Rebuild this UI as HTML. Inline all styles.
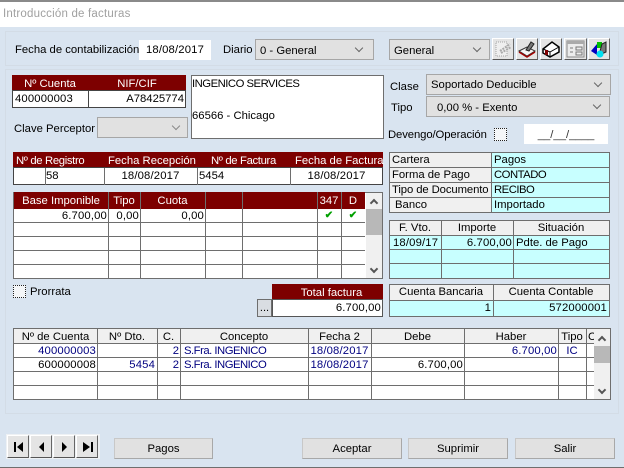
<!DOCTYPE html>
<html><head><meta charset="utf-8">
<style>
html,body{margin:0;padding:0;width:624px;height:468px;overflow:hidden;background:#d9e4f0}
body{position:relative;font-family:"Liberation Sans",sans-serif;font-size:11.3px;color:#000}
div{position:absolute;box-sizing:border-box}
.t{white-space:nowrap;line-height:14px;height:14px}
.r{text-align:right}.m{text-align:center}
.w{color:#fff}.b{color:#000080}
.n{letter-spacing:.15px}
.c{letter-spacing:-.5px}
.h{background:#6e6e6e;height:1px}
.v{background:#6e6e6e;width:1px}
.mar{background:#7d0000}
.box{background:#fff;border:1px solid #6e6e6e}
.sel{background:#e1e1e1;border:1px solid #a6a6a6;padding:3px 0 0 4px;line-height:14px;white-space:nowrap}
.chev{width:6px;height:6px;border-right:1px solid #666;border-bottom:1px solid #666;transform:rotate(45deg);top:5px}
.gr{background:#f0f0f0}
.cy{background:#c8ffff}
.btn{background:#e1e1e1;border:1px solid #b4b4b4;border-color:#c8c8c8 #a8a8a8 #a8a8a8 #c8c8c8;text-align:center;line-height:20px}
.ib{background:#e4e4e4;border:1px solid;border-color:#fff #666 #555 #fff;width:22px;height:22px;top:38px}
.dash{border:1px solid #d3dce6}
.chk{border:1px dotted #222;background:#f4f6f8}
.tick{color:#00a000;font-size:10px;font-weight:bold;line-height:14px;text-align:center}
</style></head><body>
<div style="left:0;top:0;width:624px;height:2px;background:#8a8a8a"></div>
<div style="left:0;top:2px;width:624px;height:25px;background:#fff"></div>
<div class="t" style="left:3px;top:7px;color:#a0a0a0;font-size:11.5px;letter-spacing:.2px">Introducción de facturas</div>

<div class="dash" style="left:5px;top:31px;width:614px;height:35px"></div>
<div class="dash" style="left:5px;top:69px;width:614px;height:345px"></div>

<div class="t" style="left:15px;top:43px">Fecha de contabilización</div>
<div style="left:139px;top:40px;width:72px;height:20px;background:#fff"></div>
<div class="t m n" style="left:139px;top:43px;width:72px">18/08/2017</div>
<div class="t" style="left:223px;top:43px">Diario</div>
<div class="sel" style="left:255px;top:39px;width:119px;height:21px;padding-top:4px">0 - General<div class="chev" style="left:100px"></div></div>
<div class="sel" style="left:389px;top:39px;width:101px;height:21px;padding-top:4px">General<div class="chev" style="left:84px"></div></div>

<div class="ib" style="left:492px"><svg width="20" height="20" style="position:absolute;left:0;top:0"><rect x="3" y="3" width="11" height="14" fill="#efefef" stroke="#a5a5a5" stroke-dasharray="1 1"/><path d="M7 12L17 5M8 14L18 8" stroke="#aaa" stroke-width="2" stroke-dasharray="2 1"/></svg></div>
<div class="ib" style="left:516px"><svg width="20" height="20" style="position:absolute;left:0;top:0"><path d="M2 12L10 8L18 12L10 17Z" fill="#f5f5f5" stroke="#333"/><path d="M2 13L10 18L18 13" fill="none" stroke="#a00000" stroke-width="1.5"/><path d="M9 11L14 3L17 5L12 12Z" fill="#777" stroke="#222"/></svg></div>
<div class="ib" style="left:540px"><svg width="20" height="20" style="position:absolute;left:0;top:0"><path d="M2 10L11 3L18 8L18 13L9 18L2 14Z" fill="#fff" stroke="#000" stroke-width="1.5"/><path d="M2 10L9 13L18 8M9 13L9 18" fill="none" stroke="#000"/><rect x="4" y="11" width="3" height="5" fill="#800000"/></svg></div>
<div class="ib" style="left:564px;width:23px"><svg width="21" height="20" style="position:absolute;left:0;top:0"><rect x="2" y="2" width="17" height="16" fill="#ececec" stroke="#888"/><rect x="2" y="2" width="17" height="3" fill="#aaa"/><path d="M5 9h3M5 13h3M11 8h6v3h-6zM11 13h6v3h-6z" fill="none" stroke="#777"/></svg></div>
<div class="ib" style="left:588px"><svg width="20" height="20" style="position:absolute;left:0;top:0"><path d="M2 12L8 5V16Z" fill="#0000c0"/><path d="M8 3H13V9H8Z" fill="#00c000"/><path d="M13 5L17 3V13L10 16Z" fill="#777" stroke="#222"/><circle cx="11" cy="15" r="3.5" fill="#00e0f0"/></svg></div>

<!-- cuenta -->
<div class="mar" style="left:12px;top:75px;width:174px;height:16px"></div>
<div class="t w m" style="left:12px;top:77px;width:76px">Nº Cuenta</div>
<div class="t w m" style="left:88px;top:77px;width:98px">NIF/CIF</div>
<div class="box" style="left:12px;top:90px;width:174px;height:18px;border-color:#444"></div>
<div class="v" style="left:88px;top:91px;height:17px;background:#444"></div>
<div class="t n" style="left:15px;top:92px">400000003</div>
<div class="t r" style="left:90px;top:92px;width:94px">A78425774</div>

<div class="box" style="left:191px;top:75px;width:193px;height:64px"></div>
<div class="t c" style="left:192px;top:77px">INGENICO SERVICES</div>
<div class="t" style="left:192px;top:109px">66566 - Chicago</div>

<div class="t" style="left:14px;top:122px">Clave Perceptor</div>
<div class="sel" style="left:97px;top:117px;width:91px;height:21px"><div class="chev" style="left:75px;border-color:#888"></div></div>

<div class="t" style="left:390px;top:80px">Clase</div>
<div class="sel" style="left:426px;top:74px;width:185px;height:21px">Soportado Deducible<div class="chev" style="left:168px"></div></div>
<div class="t" style="left:391px;top:101px">Tipo</div>
<div class="sel" style="left:426px;top:96px;width:184px;height:21px;padding:4px 0 0 10px">0,00 % - Exento<div class="chev" style="left:167px"></div></div>
<div class="t" style="left:388px;top:128px;letter-spacing:-.1px">Devengo/Operación</div>
<div class="chk" style="left:494px;top:128px;width:13px;height:13px"></div>
<div style="left:524px;top:124px;width:84px;height:20px;background:#fff"></div>
<div class="t m" style="left:524px;top:128px;width:84px;color:#333">__/__/____</div>

<!-- registro -->
<div class="mar" style="left:13px;top:152px;width:370px;height:16px"></div>
<div class="t w" style="left:16px;top:154px;letter-spacing:-.35px">Nº de Registro</div>
<div class="t w" style="left:108px;top:154px">Fecha Recepción</div>
<div class="t w" style="left:211px;top:154px;letter-spacing:-.35px">Nº de Factura</div>
<div class="t w" style="left:295px;top:154px">Fecha de Factura</div>
<div class="box" style="left:13px;top:167px;width:370px;height:18px;border-color:#444"></div>
<div class="v" style="left:45px;top:168px;height:17px"></div>
<div class="v" style="left:104px;top:168px;height:17px"></div>
<div class="v" style="left:197px;top:168px;height:17px"></div>
<div class="v" style="left:290px;top:168px;height:17px"></div>
<div class="t" style="left:46px;top:169px">58</div>
<div class="t m n" style="left:104px;top:169px;width:93px">18/08/2017</div>
<div class="t" style="left:199px;top:169px">5454</div>
<div class="t m n" style="left:290px;top:169px;width:93px">18/08/2017</div>

<!-- base imponible -->
<div style="left:13px;top:192px;width:370px;height:87px;background:#fff;border:1px solid #6e6e6e"></div>
<div class="mar" style="left:14px;top:192px;width:351px;height:17px"></div>
<div class="t w m" style="left:14px;top:194px;width:94px">Base Imponible</div>
<div class="t w m" style="left:108px;top:194px;width:32px">Tipo</div>
<div class="t w m" style="left:140px;top:194px;width:65px">Cuota</div>
<div class="t w m" style="left:317px;top:194px;width:24px">347</div>
<div class="t w m" style="left:341px;top:194px;width:24px">D</div>
<div class="h" style="left:14px;top:222px;width:351px"></div>
<div class="h" style="left:14px;top:236px;width:351px"></div>
<div class="h" style="left:14px;top:250px;width:351px"></div>
<div class="h" style="left:14px;top:264px;width:351px"></div>
<div class="v" style="left:108px;top:192px;height:86px"></div>
<div class="v" style="left:140px;top:192px;height:86px"></div>
<div class="v" style="left:205px;top:192px;height:86px"></div>
<div class="v" style="left:242px;top:192px;height:86px"></div>
<div class="v" style="left:317px;top:192px;height:86px"></div>
<div class="v" style="left:341px;top:192px;height:86px"></div>
<div class="t r n" style="left:14px;top:209px;width:93px">6.700,00</div>
<div class="t r n" style="left:108px;top:209px;width:31px">0,00</div>
<div class="t r n" style="left:140px;top:209px;width:64px">0,00</div>
<div class="t tick" style="left:317px;top:209px;width:24px">✔</div>
<div class="t tick" style="left:341px;top:209px;width:24px">✔</div>
<div class="gr" style="left:366px;top:193px;width:16px;height:85px"></div>
<div style="left:366px;top:209px;width:16px;height:26px;background:#b8b8b8"></div>
<div class="chev" style="left:371px;top:200px;transform:rotate(225deg);border-color:#555;border-width:2px"></div>
<div class="chev" style="left:371px;top:266px;border-color:#555;border-width:2px"></div>

<div class="chk" style="left:13px;top:285px;width:13px;height:13px"></div>
<div class="t" style="left:30px;top:285px">Prorrata</div>
<div class="mar" style="left:272px;top:284px;width:111px;height:16px"></div>
<div class="t w m" style="left:272px;top:286px;width:111px;padding-left:8px">Total factura</div>
<div class="box" style="left:272px;top:299px;width:111px;height:18px;border-color:#555"></div>
<div class="t r n" style="left:274px;top:301px;width:107px">6.700,00</div>
<div style="left:257px;top:299px;width:15px;height:18px;background:#d9dde2;border:1px solid #6e6e6e;text-align:center;line-height:16px;font-size:11px">...</div>

<!-- cartera -->
<div class="gr" style="left:389px;top:152px;width:102px;height:61px"></div>
<div class="cy" style="left:491px;top:152px;width:119px;height:61px"></div>
<div style="left:389px;top:152px;width:221px;height:61px;border:1px solid #6e6e6e"></div>
<div class="h" style="left:389px;top:167px;width:220px"></div>
<div class="h" style="left:389px;top:182px;width:220px"></div>
<div class="h" style="left:389px;top:197px;width:220px"></div>
<div class="v" style="left:491px;top:152px;height:60px"></div>
<div class="t" style="left:392px;top:153px">Cartera</div><div class="t" style="left:494px;top:153px">Pagos</div>
<div class="t" style="left:392px;top:168px">Forma de Pago</div><div class="t c" style="left:494px;top:168px">CONTADO</div>
<div class="t" style="left:392px;top:183px;letter-spacing:-.1px">Tipo de Documento</div><div class="t c" style="left:494px;top:183px">RECIBO</div>
<div class="t" style="left:395px;top:198px">Banco</div><div class="t" style="left:494px;top:198px">Importado</div>

<!-- vto -->
<div class="gr" style="left:389px;top:220px;width:221px;height:16px"></div>
<div class="cy" style="left:389px;top:235px;width:221px;height:44px"></div>
<div style="left:389px;top:220px;width:221px;height:59px;border:1px solid #6e6e6e"></div>
<div class="h" style="left:389px;top:235px;width:220px"></div>
<div class="h" style="left:389px;top:249px;width:220px"></div>
<div class="h" style="left:389px;top:263px;width:220px"></div>
<div class="v" style="left:441px;top:220px;height:58px"></div>
<div class="v" style="left:513px;top:220px;height:58px"></div>
<div class="t m" style="left:389px;top:221px;width:52px">F. Vto.</div>
<div class="t m" style="left:441px;top:221px;width:72px">Importe</div>
<div class="t m" style="left:513px;top:221px;width:96px">Situación</div>
<div class="t n" style="left:393px;top:236px">18/09/17</div>
<div class="t r n" style="left:441px;top:236px;width:71px">6.700,00</div>
<div class="t" style="left:516px;top:236px">Pdte. de Pago</div>

<!-- cuenta bancaria -->
<div class="gr" style="left:389px;top:284px;width:221px;height:17px"></div>
<div class="cy" style="left:389px;top:300px;width:221px;height:17px"></div>
<div style="left:389px;top:284px;width:221px;height:33px;border:1px solid #6e6e6e"></div>
<div class="h" style="left:389px;top:300px;width:220px"></div>
<div class="v" style="left:493px;top:284px;height:32px"></div>
<div class="t m" style="left:389px;top:285px;width:104px">Cuenta Bancaria</div>
<div class="t m" style="left:493px;top:285px;width:116px">Cuenta Contable</div>
<div class="t r n" style="left:389px;top:301px;width:102px">1</div>
<div class="t r n" style="left:493px;top:301px;width:114px">572000001</div>

<!-- apuntes -->
<div style="left:13px;top:328px;width:598px;height:72px;background:#fff;border:1px solid #6e6e6e"></div>
<div class="gr" style="left:14px;top:329px;width:580px;height:14px"></div>
<div class="h" style="left:14px;top:343px;width:580px"></div>
<div class="h" style="left:14px;top:357px;width:580px"></div>
<div class="h" style="left:14px;top:371px;width:580px"></div>
<div class="h" style="left:14px;top:385px;width:580px"></div>
<div class="v" style="left:97px;top:329px;height:70px"></div>
<div class="v" style="left:157px;top:329px;height:70px"></div>
<div class="v" style="left:180px;top:329px;height:70px"></div>
<div class="v" style="left:308px;top:329px;height:70px"></div>
<div class="v" style="left:371px;top:329px;height:70px"></div>
<div class="v" style="left:464px;top:329px;height:70px"></div>
<div class="v" style="left:558px;top:329px;height:70px"></div>
<div class="v" style="left:586px;top:329px;height:70px"></div>
<div class="t m" style="left:14px;top:330px;width:83px">Nº de Cuenta</div>
<div class="t m" style="left:97px;top:330px;width:60px">Nº Dto.</div>
<div class="t m" style="left:157px;top:330px;width:23px">C.</div>
<div class="t m" style="left:180px;top:330px;width:128px">Concepto</div>
<div class="t m" style="left:308px;top:330px;width:63px">Fecha 2</div>
<div class="t m" style="left:371px;top:330px;width:93px">Debe</div>
<div class="t m" style="left:464px;top:330px;width:94px">Haber</div>
<div class="t m" style="left:558px;top:330px;width:28px">Tipo</div>
<div class="t" style="left:588px;top:330px;width:6px;overflow:hidden">C</div>

<div class="t r b n" style="left:14px;top:344px;width:82px">400000003</div>
<div class="t r b" style="left:157px;top:344px;width:22px">2</div>
<div class="t b c" style="left:184px;top:344px">S.Fra. INGENICO</div>
<div class="t m b n" style="left:308px;top:344px;width:63px">18/08/2017</div>
<div class="t r b n" style="left:464px;top:344px;width:93px">6.700,00</div>
<div class="t m b" style="left:558px;top:344px;width:28px">IC</div>

<div class="t r n" style="left:14px;top:358px;width:82px">600000008</div>
<div class="t r b n" style="left:97px;top:358px;width:58px">5454</div>
<div class="t r b" style="left:157px;top:358px;width:22px">2</div>
<div class="t b c" style="left:184px;top:358px">S.Fra. INGENICO</div>
<div class="t m b n" style="left:308px;top:358px;width:63px">18/08/2017</div>
<div class="t r n" style="left:371px;top:358px;width:92px">6.700,00</div>

<div class="gr" style="left:594px;top:329px;width:16px;height:70px"></div>
<div style="left:594px;top:346px;width:16px;height:17px;background:#b8b8b8"></div>
<div class="chev" style="left:599px;top:337px;transform:rotate(225deg);border-color:#555;border-width:2px"></div>
<div class="chev" style="left:599px;top:387px;border-color:#555;border-width:2px"></div>

<!-- nav -->
<div style="left:6px;top:434px;width:94px;height:25px;background:#eef1f4"></div>
<div class="ib" style="left:7px;top:435px;width:22px;height:23px"><svg width="20" height="21" style="position:absolute;left:0;top:0"><path d="M6 6h2v10H6zM15 6v10L9 11z"/></svg></div>
<div class="ib" style="left:30px;top:435px;width:22px;height:23px"><svg width="20" height="21" style="position:absolute;left:0;top:0"><path d="M13 6v10L8 11z"/></svg></div>
<div class="ib" style="left:53px;top:435px;width:22px;height:23px"><svg width="20" height="21" style="position:absolute;left:0;top:0"><path d="M8 6v10L13 11z"/></svg></div>
<div class="ib" style="left:76px;top:435px;width:22px;height:23px"><svg width="20" height="21" style="position:absolute;left:0;top:0"><path d="M14 6h2v10h-2zM6 6v10L13 11z"/></svg></div>

<div class="btn" style="left:114px;top:438px;width:99px;height:21px">Pagos</div>
<div class="btn" style="left:302px;top:438px;width:100px;height:21px">Aceptar</div>
<div class="btn" style="left:408px;top:438px;width:100px;height:21px">Suprimir</div>
<div class="btn" style="left:515px;top:438px;width:100px;height:21px">Salir</div>

<div style="left:0;top:467px;width:624px;height:1px;background:#6e6e6e"></div>
</body></html>
